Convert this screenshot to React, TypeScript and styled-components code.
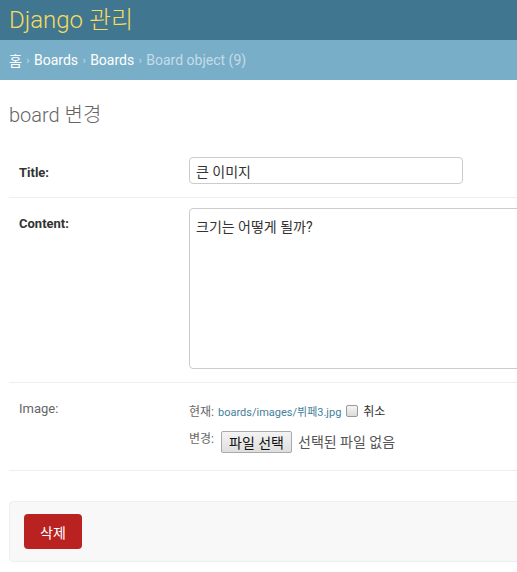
import React from "react";
import styled, { createGlobalStyle } from "styled-components";

const Global = createGlobalStyle`
  html, body { margin: 0; padding: 0; overflow: hidden; background: #fff; }
  body {
    font-family: Roboto, "Noto Sans CJK KR", "Lucida Grande", Verdana, Arial, sans-serif;
    font-size: 14px;
    color: #333;
  }
`;

const Page = styled.div`
  width: 517px;
`;

const Header = styled.div`
  height: 40px;
  background: #417690;
  padding: 0 9px;
  display: flex;
  align-items: center;
  box-sizing: border-box;
`;

const Branding = styled.h1`
  margin: 0;
  font-size: 24px;
  font-weight: 300;
  color: #f5dd5d;
  line-height: 34px;
  white-space: nowrap;
`;

const Crumbs = styled.div`
  background: #79aec8;
  height: 40px;
  padding: 0 9px;
  display: flex;
  align-items: center;
  gap: 4.4px;
  font-size: 14px;
  color: #c4dce8;
  white-space: nowrap;
`;

const Crumb = styled.a<{ $current?: boolean }>`
  color: ${(p) => (p.$current ? "#c4dce8" : "#fff")};
  text-decoration: none;
`;

const Sep = styled.span`
  font-size: 11px;
  color: #c4dce8;
`;

const Content = styled.div`
  padding: 20px 9px 0;
`;

const Title = styled.h1`
  margin: 2px 0 0;
  font-size: 20px;
  font-weight: 300;
  color: #666;
  line-height: 26px;
  height: 45px;
`;

const Row = styled.div`
  display: flex;
  padding: 10px 10px 13px;
  border-bottom: 1px solid #eee;
  width: 700px;
`;

const Label = styled.label<{ $required?: boolean }>`
  width: 160px;
  flex: none;
  padding: 8px 10px 0 0;
  font-size: 13px;
  font-weight: ${(p) => (p.$required ? 700 : 400)};
  color: ${(p) => (p.$required ? "#333" : "#666")};
`;

const TextInput = styled.div`
  width: 274px;
  height: 27px;
  box-sizing: border-box;
  border: 1px solid #ccc;
  border-radius: 4px;
  padding: 0 6px;
  display: flex;
  align-items: center;
  font-size: 14px;
  color: #333;
`;

const TextArea = styled.div`
  width: 610px;
  height: 161px;
  box-sizing: border-box;
  border: 1px solid #ccc;
  border-radius: 4px;
  padding: 7px 6px;
  font-size: 14px;
  color: #333;
`;

const FileCol = styled.div`
  display: flex;
  flex-direction: column;
  gap: 10px;
  padding-top: 9px;
  padding-bottom: 4px;
  font-size: 12px;
  color: #666;
`;

const FileLine = styled.div`
  display: flex;
  align-items: center;
  gap: 4px;
  white-space: nowrap;
`;

const Small = styled.span`
  align-self: flex-start;
`;

const FileLink = styled.a`
  color: #447e9b;
  text-decoration: none;
  font-size: 11px;
`;

const Check = styled.span`
  width: 12px;
  height: 12px;
  box-sizing: border-box;
  border: 1px solid #999;
  border-radius: 2px;
  background: linear-gradient(#f4f4f4, #dcdcdc);
  display: inline-block;
  margin: 0 1px;
`;

const ClearText = styled.span`
  color: #333;
`;

const FileButton = styled.span`
  display: inline-flex;
  align-items: center;
  height: 22px;
  box-sizing: border-box;
  padding: 0 7px;
  border: 1px solid #a9a9a9;
  border-radius: 2px;
  background: linear-gradient(#f4f4f4, #dedede);
  font-size: 14px;
  color: #111;
  margin-left: 3px;
  margin-top: 2px;
`;

const NoFile = styled.span`
  font-size: 14px;
  color: #555;
  margin-left: 2px;
`;

const SubmitRow = styled.div`
  margin-top: 30px;
  width: 700px;
  background: #f8f8f8;
  border: 1px solid #eee;
  border-radius: 4px;
  padding: 12px 14px;
`;

const DeleteLink = styled.a`
  display: inline-flex;
  align-items: center;
  justify-content: center;
  width: 58px;
  height: 35px;
  box-sizing: border-box;
  background: #ba2121;
  border-radius: 4px;
  color: #fff;
  font-size: 14px;
  text-decoration: none;
`;

export default function App() {
  return (
    <Page>
      <Global />
      <Header>
        <Branding>Django 관리</Branding>
      </Header>
      <Crumbs>
        <Crumb href="#">홈</Crumb>
        <Sep>›</Sep>
        <Crumb href="#">Boards</Crumb>
        <Sep>›</Sep>
        <Crumb href="#">Boards</Crumb>
        <Sep>›</Sep>
        <Crumb $current>Board object (9)</Crumb>
      </Crumbs>
      <Content>
        <Title>board 변경</Title>
        <Row>
          <Label $required>Title:</Label>
          <TextInput>큰 이미지</TextInput>
        </Row>
        <Row>
          <Label $required>Content:</Label>
          <TextArea>크기는 어떻게 될까?</TextArea>
        </Row>
        <Row>
          <Label>Image:</Label>
          <FileCol>
            <FileLine>
              현재: <FileLink href="#">boards/images/뷔페3.jpg</FileLink>
              <Check />
              <ClearText>취소</ClearText>
            </FileLine>
            <FileLine>
              <Small>변경:</Small>
              <FileButton>파일 선택</FileButton>
              <NoFile>선택된 파일 없음</NoFile>
            </FileLine>
          </FileCol>
        </Row>
        <SubmitRow>
          <DeleteLink href="#">삭제</DeleteLink>
        </SubmitRow>
      </Content>
    </Page>
  );
}
